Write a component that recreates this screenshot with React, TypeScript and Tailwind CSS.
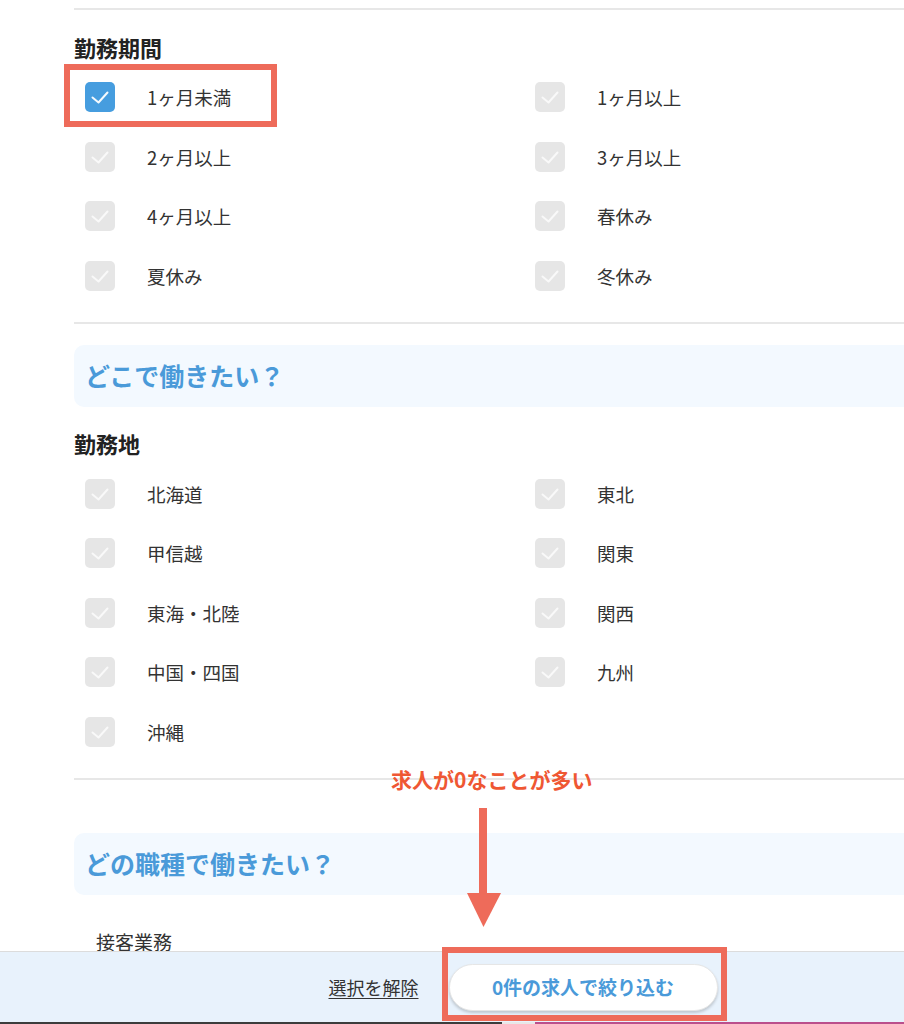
import React from "react";

function Box({ checked }: { checked?: boolean }) {
  return (
    <span
      className={
        "flex h-[30px] w-[30px] shrink-0 items-center justify-center rounded-[5px] " +
        (checked ? "bg-[#469ddf]" : "bg-[#e6e6e6]")
      }
    >
      <svg width="30" height="30" viewBox="0 0 30 30">
        <path
          d="M7.5 15.5 L13.5 20.5 L22.5 10.5"
          stroke="white"
          strokeOpacity={checked ? 0.95 : 0.75}
          strokeWidth="2"
          fill="none"
          strokeLinecap="round"
          strokeLinejoin="round"
        />
      </svg>
    </span>
  );
}

function Item({ label, checked }: { label: string; checked?: boolean }) {
  return (
    <div className="flex h-[59.5px] items-center pl-[11px]">
      <Box checked={checked} />
      <span className="ml-[32px] text-[18.5px] leading-none text-[#333]">{label}</span>
    </div>
  );
}

function Heading({ children }: { children: React.ReactNode }) {
  return (
    <div className="mt-[21.5px] text-[22px] font-bold leading-[30px] text-[#222]">{children}</div>
  );
}

function Divider() {
  return <div className="h-[2px] w-full bg-[#e7e7e7]" />;
}

function Title({ children }: { children: React.ReactNode }) {
  return (
    <div className="flex h-[62px] items-center rounded-[10px] bg-[#f3f9ff] pl-[11px] text-[25px] font-bold text-[#4a9ad9]">
      {children}
    </div>
  );
}

const periods = ["1ヶ月未満", "1ヶ月以上", "2ヶ月以上", "3ヶ月以上", "4ヶ月以上", "春休み", "夏休み", "冬休み"];
const places = ["北海道", "東北", "甲信越", "関東", "東海・北陸", "関西", "中国・四国", "九州", "沖縄"];

export default function App() {
  return (
    <div className="relative h-[1024px] w-[904px] overflow-hidden bg-white font-['Noto_Sans_CJK_JP',sans-serif]">
      <div className="ml-[74px] w-[900px] pt-[8px]">
        <Divider />
        <Heading>勤務期間</Heading>
        <div className="mt-[6px] grid grid-cols-[450px_450px]">
          {periods.map((p, i) => (
            <Item key={p} label={p} checked={i === 0} />
          ))}
        </div>
        <div className="mt-[16px]">
          <Divider />
        </div>
        <div className="mt-[21px]">
          <Title>どこで働きたい？</Title>
        </div>
        <Heading>勤務地</Heading>
        <div className="mt-[6px] grid grid-cols-[450px_450px]">
          {places.map((p) => (
            <Item key={p} label={p} />
          ))}
        </div>
        <div className="mt-[16px]">
          <Divider />
        </div>
        <div className="mt-[53px]">
          <Title>どの職種で働きたい？</Title>
        </div>
        <div className="mt-[37px] pl-[22px] text-[19px] leading-none text-[#333]">接客業務</div>
      </div>

      {/* annotation: highlighted first option */}
      <div className="absolute left-[64px] top-[64px] h-[63px] w-[213px] border-[6px] border-[#ee6b5a]" />

      {/* annotation text + arrow */}
      <div className="absolute left-[391px] top-[765px] text-[21px] font-bold leading-[28px] text-[#ef5733]">
        求人が0なことが多い
      </div>
      <svg className="absolute left-[466px] top-[807px]" width="36" height="122" viewBox="0 0 36 122">
        <rect x="13" y="1" width="8" height="88" fill="#ee6b5a" />
        <polygon points="1,86 35,86 17.5,120" fill="#ee6b5a" />
      </svg>

      {/* bottom bar */}
      <div className="absolute bottom-0 left-0 w-[1046px]">
        <div className="h-[1px] bg-[#dcdcdc]" />
        <div className="flex h-[70px] items-center justify-center gap-[30px] bg-[#e8f2fc]">
          <span className="text-[18px] leading-none text-[#333] underline underline-offset-[3px]">選択を解除</span>
          <button className="flex h-[47px] w-[269px] items-center justify-center rounded-full border border-[#e6e6e6] bg-white text-[19px] font-bold text-[#4a9ad9] shadow-[0_2px_3px_rgba(0,0,0,0.18)]">
            0件の求人で絞り込む
          </button>
        </div>
        <div className="flex h-[2px]">
          <div className="w-[502px] bg-[#3c3c3c]" />
          <div className="w-[33px] bg-[#e8e8e8]" />
          <div className="flex-1 bg-[#bb4f8c]" />
        </div>
      </div>

      <div className="absolute left-[442px] top-[947px] h-[74px] w-[285px] border-[6px] border-[#ee6b5a]" />
    </div>
  );
}
